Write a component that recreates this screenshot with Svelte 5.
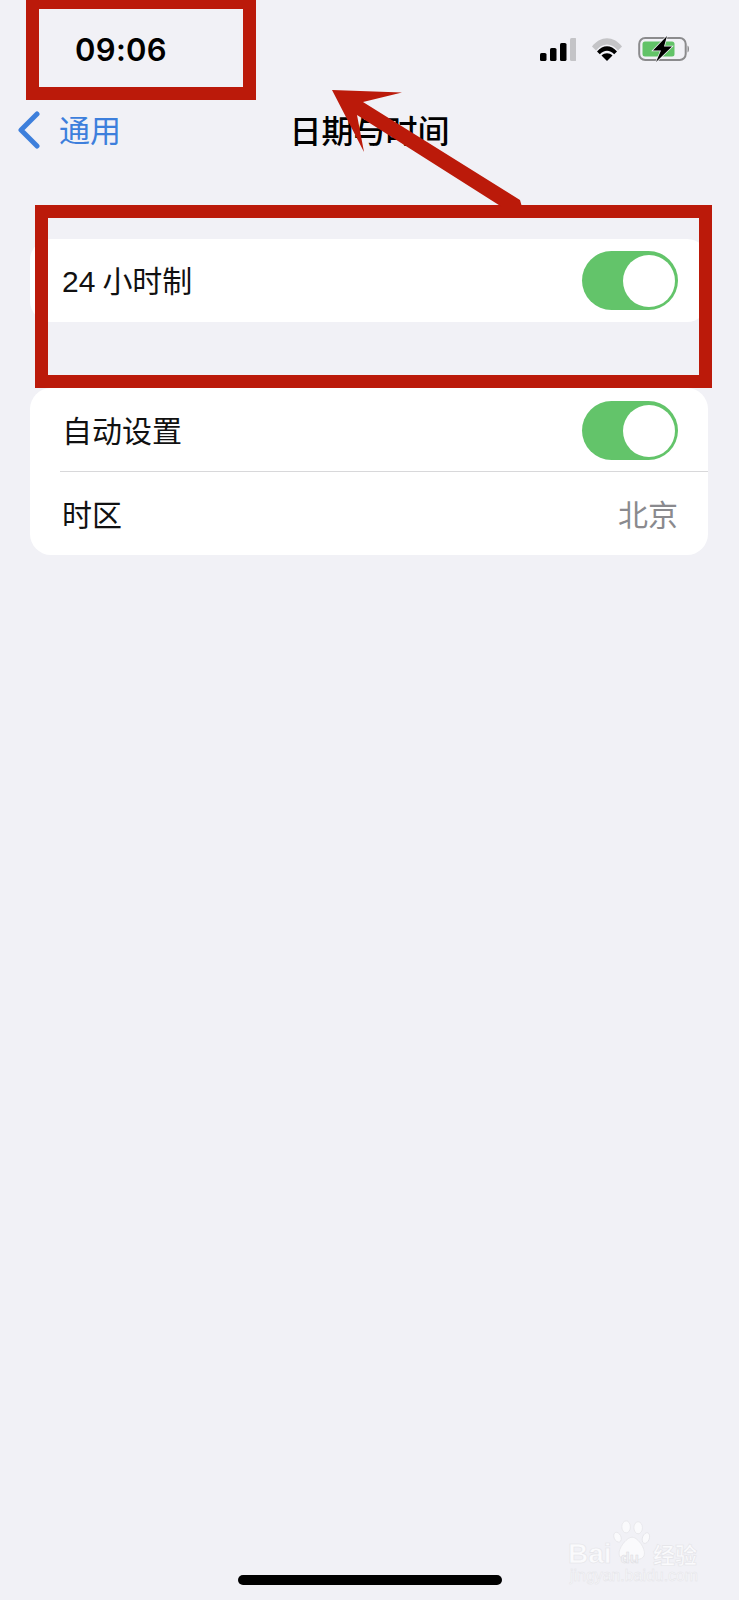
<script>
  const bars = [
    { x: 0, y: 15, h: 8, on: true },
    { x: 10, y: 10, h: 13, on: true },
    { x: 20, y: 5, h: 18, on: true },
    { x: 30, y: 0, h: 23, on: false }
  ];
</script>

<div class="page">
  <header class="status">
    <span class="time">09:06</span>
    <div class="status-icons">
      <svg class="signal" width="36" height="23" viewBox="0 0 36 23">
        {#each bars as bar}
          <rect x={bar.x} y={bar.y} width="6.5" height={bar.h} rx="1.6" fill={bar.on ? '#000' : '#c4c4c7'} />
        {/each}
      </svg>
      <svg class="wifi" width="32" height="24" viewBox="0 0 32 24">
        <path d="M1 9.5 C9.5 -1.5 22.5 -1.5 31 9.5 L27 13.5 C20.5 5.5 11.5 5.5 5 13.5 Z" fill="#c4c4c7" />
        <path d="M6 14.5 C12 7.5 20 7.5 26 14.5 L23.2 17.3 C19 12.6 13 12.6 8.8 17.3 Z" fill="#000" />
        <path d="M10.5 18.5 C13.5 15.6 18.5 15.6 21.5 18.5 L16 24 Z" fill="#000" />
      </svg>
      <svg class="battery" width="52" height="26" viewBox="0 0 52 26">
        <rect x="1.2" y="2" width="46.5" height="22" rx="6" fill="none" stroke="#8b8b8d" stroke-width="2" />
        <rect x="4.5" y="5.5" width="32" height="15" rx="2.5" fill="#62c368" />
        <path d="M49.5 9.5 C51.5 10 51.5 16 49.5 16.5 Z" fill="#8b8b8d" />
        <path d="M29 0 L15 14.5 H23 L18 26 L34 10.5 H26 Z" fill="#000" stroke="#f1f1f6" stroke-width="1.5" paint-order="stroke" />
      </svg>
    </div>
  </header>

  <nav class="navbar">
    <div class="back">
      <svg width="24" height="38" viewBox="0 0 24 38">
        <path d="M20 3 L4 19 L20 35" fill="none" stroke="#3d7fdc" stroke-width="5" stroke-linecap="round" stroke-linejoin="round" />
      </svg>
      <span class="back-label">通用</span>
    </div>
    <h1>日期与时间</h1>
  </nav>

  <section class="card first">
    <div class="row">
      <span><span class="digits">24</span>小时制</span>
      <span class="toggle"><span class="knob"></span></span>
    </div>
  </section>

  <section class="card second">
    <div class="row">
      <span>自动设置</span>
      <span class="toggle"><span class="knob"></span></span>
    </div>
    <div class="divider"></div>
    <div class="row">
      <span>时区</span>
      <span class="value">北京</span>
    </div>
  </section>

  <div class="home-bar"></div>

  <!-- annotations drawn on top of the screenshot -->
  <div class="mark mark-time"></div>
  <div class="mark mark-switch"></div>
  <svg class="arrow" width="739" height="300" viewBox="0 0 739 300">
    <polygon points="332,90 402,92.5 363,102 520,200 522,207 502,207 357,115 364,152" fill="#bb1a0a" />
  </svg>

  <div class="watermark">
    <svg class="paw" width="40" height="43" viewBox="0 0 46 50">
      <g fill="#fafafc" stroke="#e6e6ea" stroke-width="1">
        <ellipse cx="5" cy="20" rx="4" ry="6" transform="rotate(-25 5 20)" />
        <ellipse cx="15" cy="8" rx="5" ry="7" />
        <ellipse cx="29" cy="9" rx="5" ry="7" />
        <ellipse cx="38" cy="21" rx="4" ry="6.5" transform="rotate(20 38 21)" />
        <path d="M22 20 C29 20 40 36 35 43 C31 48 13 48 8 43 C3 36 15 20 22 20 Z" />
      </g>
    </svg>
    <div class="wm-top"><span>Bai</span><span class="wm-du">du</span><span class="wm-cn">经验</span></div>
    <div class="wm-url">jingyan.baidu.com</div>
  </div>
</div>

<style>
  :global(body) {
    margin: 0;
    background: #f1f1f6;
  }

  .page {
    position: relative;
    width: 739px;
    height: 1600px;
    overflow: hidden;
    background: #f1f1f6;
    color: #000;
    font-family: "Liberation Sans", "Noto Sans CJK SC", sans-serif;
  }

  .status {
    display: flex;
    justify-content: space-between;
    align-items: center;
    height: 98px;
    padding: 0 49px 0 75px;
    box-sizing: border-box;
  }

  .time {
    font-family: Inter, "Liberation Sans", sans-serif;
    font-size: 31px;
    font-weight: 600;
    letter-spacing: 0.3px;
  }

  .status-icons {
    display: flex;
    align-items: center;
    gap: 15px;
  }

  .navbar {
    position: relative;
    display: flex;
    align-items: center;
    justify-content: center;
    height: 64px;
  }

  .back {
    position: absolute;
    left: 17px;
    top: 11px;
    display: flex;
    align-items: center;
    gap: 18px;
    color: #3d7fdc;
    font-size: 31px;
    font-family: "Noto Sans CJK SC", sans-serif;
    font-weight: 400;
  }

  .back-label {
    margin-top: -3px;
  }

  h1 {
    margin: -3px 0 0;
    font-size: 32px;
    line-height: 64px;
    font-family: "Noto Sans CJK SC", sans-serif;
    font-weight: 500;
  }

  .card {
    margin: 0 31px 0 30px;
    background: #fff;
    border-radius: 21px;
  }

  .first {
    margin-top: 77px;
  }

  .second {
    margin-top: 66px;
  }

  .row {
    display: flex;
    align-items: center;
    justify-content: space-between;
    height: 83px;
    padding: 0 30px 0 32px;
    font-size: 30px;
    line-height: 40px;
    color: #111;
    font-family: "Noto Sans CJK SC", sans-serif;
    font-weight: 400;
  }

  .row > span:first-child {
    margin-top: -1px;
  }

  .row > .value {
    margin-top: -1px;
  }

  .digits {
    margin-right: 7px;
    font-family: "Liberation Sans", sans-serif;
  }

  .divider {
    height: 1px;
    margin-left: 30px;
    background: #d8d8da;
  }

  .value {
    color: #8a8a8e;
  }

  .toggle {
    position: relative;
    display: block;
    width: 96px;
    height: 59px;
    border-radius: 30px;
    background: #63c46a;
  }

  .second .toggle {
    margin-top: 2px;
  }

  .knob {
    position: absolute;
    top: 4px;
    right: 3px;
    width: 52px;
    height: 52px;
    border-radius: 50%;
    background: #fff;
  }

  .home-bar {
    position: absolute;
    left: 238px;
    top: 1575px;
    width: 264px;
    height: 10px;
    border-radius: 5px;
    background: #000;
  }

  .mark {
    position: absolute;
    box-sizing: border-box;
    border: 13px solid #bb1a0a;
  }

  .mark-time {
    left: 26px;
    top: -4px;
    width: 230px;
    height: 104px;
  }

  .mark-switch {
    left: 35px;
    top: 205px;
    width: 677px;
    height: 183px;
  }

  .arrow {
    position: absolute;
    left: 0;
    top: 0;
    pointer-events: none;
  }

  .watermark {
    position: absolute;
    left: 568px;
    top: 1520px;
    width: 132px;
    height: 66px;
    color: #fafafc;
  }

  .paw {
    position: absolute;
    left: 45px;
    top: 0;
  }

  .wm-top {
    position: absolute;
    left: 0;
    top: 18px;
    display: flex;
    align-items: baseline;
    font-size: 28px;
    font-weight: 700;
    line-height: 30px;
    -webkit-text-stroke: 0.6px #e4e4e8;
  }

  .wm-du {
    position: relative;
    margin-left: 9px;
    font-size: 15px;
    color: #f1f1f6;
    -webkit-text-stroke: 0.5px #dcdce0;
  }

  .wm-cn {
    margin-left: 14px;
    font-size: 22px;
    font-family: "Noto Sans CJK SC", sans-serif;
  }

  .wm-url {
    position: absolute;
    left: 2px;
    top: 47px;
    font-size: 15.9px;
    white-space: nowrap;
    -webkit-text-stroke: 0.5px #e4e4e8;
  }
</style>
